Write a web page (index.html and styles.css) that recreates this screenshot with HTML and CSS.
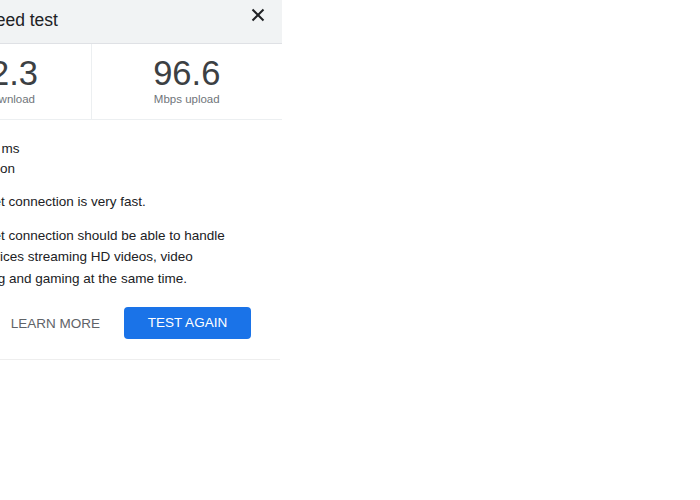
FILE: index.html
```html
<!DOCTYPE html>
<html>
<head>
<meta charset="utf-8">
<link rel="stylesheet" href="styles.css">
</head>
<body>
<div class="card">
  <div class="header">
    <span class="title">Internet speed test</span>
    <svg class="close" width="16" height="16" viewBox="0 0 16 16"><path d="M2.5 2.5 L13.5 13.5 M13.5 2.5 L2.5 13.5" stroke="#202124" stroke-width="2" fill="none"/></svg>
  </div>
  <div class="stats">
    <div class="stat">
      <div class="num">102.3</div>
      <div class="label">Mbps download</div>
    </div>
    <div class="stat">
      <div class="num">96.6</div>
      <div class="label">Mbps upload</div>
    </div>
  </div>
  <div class="content">
    <div class="meta">
      <div>Latency: 12 ms</div>
      <div>Server: Lisbon</div>
    </div>
    <p class="para">Your Internet connection is very fast.</p>
    <p class="para">Your Internet connection should be able to handle<br>multiple devices streaming HD videos, video<br>conferencing and gaming at the same time.</p>
    <div class="actions">
      <span class="learn">LEARN MORE</span>
      <span class="again">TEST AGAIN</span>
    </div>
  </div>
</div>
</body>
</html>
```
FILE: styles.css
```css
html, body {
  margin: 0;
  padding: 0;
  background: #ffffff;
  overflow: hidden;
}
body {
  font-family: "Liberation Sans", Arial, sans-serif;
  color: #202124;
}
.card {
  width: 383px;
  margin-left: -101px;
  background: #ffffff;
}
.header {
  height: 43px;
  background: #f1f3f4;
  border-bottom: 1px solid #dfe1e5;
  display: flex;
  align-items: center;
  justify-content: space-between;
  padding: 0 16px 0 14px;
}
.title {
  font-size: 17.5px;
  color: #202124;
  margin-top: -3px;
}
.close {
  margin-top: -14px;
}
.stats {
  display: grid;
  grid-template-columns: 1fr 1fr;
  border-bottom: 1px solid #eceff1;
  height: 75px;
}
.stat {
  text-align: center;
  padding-top: 10px;
}
.stat + .stat {
  border-left: 1px solid #eceff1;
}
.num {
  font-size: 34.5px;
  line-height: 38px;
  color: #3c4043;
}
.label {
  font-size: 11.5px;
  line-height: 14px;
  color: #70757a;
}
.content {
  padding: 20px 0 20px 29px;
  font-size: 13.5px;
  border-bottom: 1px solid #eeeeee;
  margin-right: 2px;
}
.meta {
  line-height: 20px;
  margin-top: -1px;
}
.para {
  margin: 12px 0 0 0;
  line-height: 21.5px;
}
.actions {
  display: flex;
  justify-content: flex-end;
  align-items: center;
  gap: 24px;
  margin-top: 18px;
  padding-right: 29px;
}
.learn {
  color: #5f6368;
  font-size: 13.5px;
}
.again {
  background: #1a73e8;
  color: #ffffff;
  font-size: 13.5px;
  width: 127px;
  height: 32px;
  line-height: 32px;
  text-align: center;
  border-radius: 4px;
}
```
